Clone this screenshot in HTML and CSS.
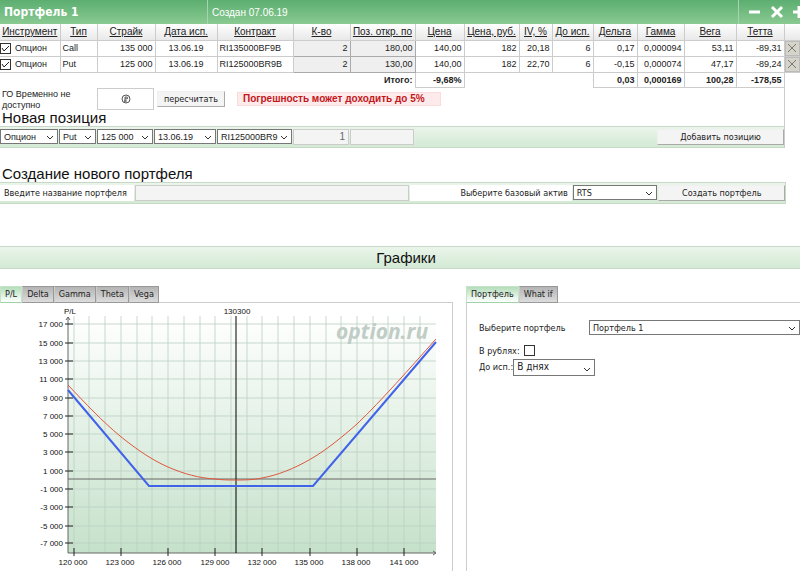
FILE: index.html
```html
<!DOCTYPE html>
<html lang="ru">
<head>
    <meta charset="UTF-8">
    <meta name="viewport" content="width=device-width, initial-scale=1.0">
    <title>Портфель 1</title>
    <link rel="stylesheet" href="styles.css">
</head>
<body>

    <header class="title-bar">
        <h1>Портфель 1</h1>
        <span class="created">Создан 07.06.19</span>
        <div class="title-buttons">
            <button type="button" aria-label="Свернуть"><svg width="14" height="14" viewBox="0 0 14 14"><path d="M1 7H12"/></svg></button>
            <button type="button" aria-label="Закрыть"><svg width="14" height="14" viewBox="0 0 14 14"><path d="M2 2L12 12M12 2L2 12"/></svg></button>
            <button type="button" aria-label="Добавить"><svg width="14" height="14" viewBox="0 0 14 14"><path d="M1 7H13M7 1V13"/></svg></button>
        </div>
    </header>

    <table class="positions">
        <colgroup>
            <col class="c-tool"><col class="c-type"><col class="c-strike"><col class="c-date"><col class="c-contract"><col class="c-qty"><col class="c-open"><col class="c-price"><col class="c-rub"><col class="c-iv"><col class="c-days"><col class="c-delta"><col class="c-gamma"><col class="c-vega"><col class="c-theta"><col class="c-del">
        </colgroup>
        <thead>
            <tr>
                <th><a href="#">Инструмент</a></th>
                <th><a href="#">Тип</a></th>
                <th><a href="#">Страйк</a></th>
                <th><a href="#">Дата исп.</a></th>
                <th><a href="#">Контракт</a></th>
                <th><a href="#">К-во</a></th>
                <th><a href="#">Поз. откр. по</a></th>
                <th><a href="#">Цена</a></th>
                <th><a href="#">Цена, руб.</a></th>
                <th><a href="#">IV, %</a></th>
                <th><a href="#">До исп.</a></th>
                <th><a href="#">Дельта</a></th>
                <th><a href="#">Гамма</a></th>
                <th><a href="#">Вега</a></th>
                <th><a href="#">Тетта</a></th>
                <th></th>
            </tr>
        </thead>
        <tbody>
            <tr>
                <td class="tool"><label><input type="checkbox" checked>Опцион</label></td>
                <td class="left">Call</td>
                <td>135 000</td>
                <td class="center">13.06.19</td>
                <td class="left">RI135000BF9B</td>
                <td class="edit"><input type="text" value="2" aria-label="К-во"></td>
                <td class="edit"><input type="text" value="180,00" aria-label="Поз. откр. по"></td>
                <td>140,00</td>
                <td>182</td>
                <td>20,18</td>
                <td>6</td>
                <td>0,17</td>
                <td>0,000094</td>
                <td>53,11</td>
                <td>-89,31</td>
                <td class="del"><button type="button" aria-label="Удалить"><svg width="10" height="10" viewBox="0 0 10 10"><path d="M1 1L9 9M9 1L1 9"/></svg></button></td>
            </tr>
            <tr>
                <td class="tool"><label><input type="checkbox" checked>Опцион</label></td>
                <td class="left">Put</td>
                <td>125 000</td>
                <td class="center">13.06.19</td>
                <td class="left">RI125000BR9B</td>
                <td class="edit"><input type="text" value="2" aria-label="К-во"></td>
                <td class="edit"><input type="text" value="130,00" aria-label="Поз. откр. по"></td>
                <td>140,00</td>
                <td>182</td>
                <td>22,70</td>
                <td>6</td>
                <td>-0,15</td>
                <td>0,000074</td>
                <td>47,17</td>
                <td>-89,24</td>
                <td class="del"><button type="button" aria-label="Удалить"><svg width="10" height="10" viewBox="0 0 10 10"><path d="M1 1L9 9M9 1L1 9"/></svg></button></td>
            </tr>
        </tbody>
        <tfoot>
            <tr>
                <td colspan="7" class="total">Итого:</td>
                <td>-9,68%</td>
                <td colspan="3" class="blank"></td>
                <td>0,03</td>
                <td>0,000169</td>
                <td>100,28</td>
                <td>-178,55</td>
                <td class="none"></td>
            </tr>
        </tfoot>
    </table>

    <section class="new-position">
        <div class="margin-row">
            <span class="margin-label">ГО Временно не доступно</span>
            <span class="margin-box"><svg width="10" height="10" viewBox="0 0 10 10"><circle cx="5" cy="5" r="4"/><path d="M4 8V3H5Q7 3 7 4Q7 5 4 5M3 7H6"/></svg></span>
            <button type="button" class="btn">пересчитать</button>
            <span class="warning">Погрешность может доходить до 5%</span>
        </div>
        <h2>Новая позиция</h2>
        <form class="bar position-bar">
            <select aria-label="Инструмент"><option>Опцион</option></select>
            <select aria-label="Тип"><option>Put</option></select>
            <select aria-label="Страйк"><option>125 000</option></select>
            <select aria-label="Дата исп."><option>13.06.19</option></select>
            <select aria-label="Контракт"><option>RI125000BR9</option></select>
            <input type="text" value="1" aria-label="К-во">
            <input type="text" value="" aria-label="Поз. откр. по">
            <button type="button" class="btn">Добавить позицию</button>
        </form>
    </section>

    <section class="new-portfolio">
        <h2>Создание нового портфеля</h2>
        <form class="bar portfolio-bar">
            <label for="portfolio-name">Введите название портфеля</label>
            <input type="text" id="portfolio-name">
            <label for="asset" class="right">Выберите базовый актив</label>
            <select id="asset"><option>RTS</option></select>
            <button type="button" class="btn">Создать портфель</button>
        </form>
    </section>

    <h2 class="charts-title">Графики</h2>

    <main class="charts">
        <section class="pane">
            <nav class="tabs">
                <button type="button" class="active">P/L</button>
                <button type="button">Delta</button>
                <button type="button">Gamma</button>
                <button type="button">Theta</button>
                <button type="button">Vega</button>
            </nav>
            <div class="pane-body chart-body">
                <svg class="chart" viewBox="0 0 452 270">
                    <defs>
                        <linearGradient id="plot" x1="0" y1="0" x2="0" y2="1">
                            <stop offset="0" stop-color="#ffffff"/>
                            <stop offset="1" stop-color="#c5e1ca"/>
                        </linearGradient>
                    </defs>
                    <rect x="68" y="13" width="368" height="237" fill="url(#plot)"/>
                    <path class="grid" d="M74 13V250M89 13V250M105 13V250M121 13V250M137 13V250M152 13V250M168 13V250M184 13V250M200 13V250M215 13V250M231 13V250M247 13V250M262 13V250M278 13V250M294 13V250M310 13V250M326 13V250M341 13V250M357 13V250M373 13V250M388 13V250M404 13V250M420 13V250"/>
                    <path class="grid" d="M68 21H436M68 40H436M68 58H436M68 76H436M68 95H436M68 113H436M68 131H436M68 149H436M68 168H436M68 186H436M68 204H436M68 223H436M68 240H436"/>
                    <text class="watermark" x="336" y="36">option.ru</text>
                    <path class="axis" d="M68 14V250H435M66 17L68 14L70 17M433 248L436 250L433 252"/>
                    <path class="axis" d="M68 176H436"/>
                    <path class="tick" d="M65 21H73M65 40H73M65 58H73M65 76H73M65 95H73M65 113H73M65 131H73M65 149H73M65 168H73M65 186H73M65 204H73M65 223H73M65 240H73"/>
                    <path class="tick" d="M74 245V253M121 245V253M168 245V253M215 245V253M262 245V253M310 245V253M357 245V253M404 245V253"/>
                    <path class="now" d="M236 13V250"/>
                    <path class="current" d="M68 82C85 100 103 119 120 133C136 146 152 157 168 164C184 171 199 175 215 176C222 177 229 177 236 177C245 177 253 177 262 175C278 172 293 166 309 157C325 148 341 135 357 121C383 96 409 66 436 36"/>
                    <path class="expiry" d="M68 87L149 183H313L436 39"/>
                    <g class="labels">
                        <text x="70" y="11">P/L</text>
                        <text x="237" y="11">130300</text>
                        <text x="73" y="262">120 000</text>
                        <text x="120" y="262">123 000</text>
                        <text x="167" y="262">126 000</text>
                        <text x="215" y="262">129 000</text>
                        <text x="262" y="262">132 000</text>
                        <text x="309" y="262">135 000</text>
                        <text x="356" y="262">138 000</text>
                        <text x="404" y="262">141 000</text>
                    </g>
                    <g class="labels labels-y">
                        <text x="63" y="24">17 000</text>
                        <text x="63" y="43">15 000</text>
                        <text x="63" y="61">13 000</text>
                        <text x="63" y="79">11 000</text>
                        <text x="63" y="98">9 000</text>
                        <text x="63" y="116">7 000</text>
                        <text x="63" y="134">5 000</text>
                        <text x="63" y="152">3 000</text>
                        <text x="63" y="171">1 000</text>
                        <text x="63" y="189">-1 000</text>
                        <text x="63" y="207">-3 000</text>
                        <text x="63" y="226">-5 000</text>
                        <text x="63" y="243">-7 000</text>
                    </g>
                </svg>
            </div>
        </section>

        <section class="pane">
            <nav class="tabs">
                <button type="button" class="active">Портфель</button>
                <button type="button">What if</button>
            </nav>
            <form class="pane-body settings">
                <div class="row row-portfolio">
                    <label for="portfolio">Выберите портфель</label>
                    <select id="portfolio"><option>Портфель 1</option></select>
                </div>
                <div class="row">
                    <label for="rub">В рублях:</label>
                    <input type="checkbox" id="rub">
                </div>
                <div class="row row-days">
                    <label for="days">До исп.:</label>
                    <select id="days"><option>В днях</option></select>
                </div>
            </form>
        </section>
    </main>

</body>
</html>
```
FILE: styles.css
```css
* { box-sizing: border-box; }
body { margin: 0; background: #fff; color: #222; font: 10px/12px "Liberation Sans", Arial, sans-serif; overflow-x: hidden; }
button, input, select { font: inherit; color: inherit; margin: 0; border-radius: 0; }
button { padding: 0; }
h1, h2 { margin: 0; font-weight: normal; }
h2 { font-size: 15px; line-height: 16px; padding-left: 2px; color: #111; }

/* title */
.title-bar { display: grid; grid-template-columns: 207fr 531fr 62fr; height: 24px; align-items: center; color: #fff; background: linear-gradient(#5cae70, #8aca92); overflow: hidden; }
.title-bar > * { min-width: 0; }
.title-bar h1 { font: bold 12px/24px "DejaVu Sans Condensed", Tahoma, sans-serif; padding: 0 0 0 4px; }
.created { padding: 2px 0 0 4px; line-height: 22px; border-left: 1px solid #a5d5ac; }
.title-buttons { display: flex; gap: 8px; height: 24px; align-items: center; padding-left: 9px; border-left: 1px solid #a5d5ac; }
.title-buttons button { flex: none; height: 14px; border: 0; background: none; }
.title-buttons svg { display: block; fill: none; stroke: #fff; stroke-width: 3; }

/* positions */
.positions { width: 100%; table-layout: fixed; border-collapse: collapse; }
.c-tool { width: 60px; }
.c-type { width: 37px; }
.c-strike { width: 58px; }
.c-date { width: 62px; }
.c-contract { width: 76px; }
.c-qty { width: 57px; }
.c-open { width: 65px; }
.c-price { width: 49px; }
.c-rub { width: 55px; }
.c-iv { width: 33px; }
.c-days { width: 41px; }
.c-delta { width: 44px; }
.c-gamma { width: 47px; }
.c-vega { width: 52px; }
.c-theta { width: 48px; }
.c-del { width: 16px; }
.positions th { height: 16px; padding: 0; font-weight: normal; white-space: nowrap; border: 1px solid #ccc; border-top: 0; background: linear-gradient(#fff, #e8e8e8); }
.positions th:first-child, .positions td:first-child { border-left: 0; }
.positions th a { color: #222; }
.positions td { height: 16px; padding: 0 2px; font-size: 9px; text-align: right; white-space: nowrap; border: 1px solid #ccc; }
.positions .left { text-align: left; }
.positions .center { text-align: center; }
.positions .tool { padding: 0; text-align: left; }
.tool label { display: flex; align-items: center; gap: 4px; }
.positions .edit { padding: 0; background: #efefef; border-color: #aaa; }
.edit input { display: block; width: 100%; height: 15px; border: 0; padding: 0 2px; background: none; text-align: right; }
.positions .del { padding: 0; }
.del button { display: flex; align-items: center; justify-content: center; width: 100%; height: 15px; border: 1px solid #bbb; background: #d6d3c9; }
.del svg { fill: none; stroke: #777; }
.positions tfoot td { height: 15px; font-weight: bold; }
.positions tfoot .total { border: 0; }
.positions tfoot .blank, .positions tfoot .none { border-bottom: 0; }
.positions tfoot .none { border-right: 0; }

/* form controls */
input[type="checkbox"] { appearance: none; flex: none; width: 11px; height: 11px; border: 1px solid #333; background: #fff; }
input[type="checkbox"]:checked { background: #fff url("data:image/svg+xml,%3Csvg xmlns='http://www.w3.org/2000/svg' viewBox='0 0 9 9'%3E%3Cpath d='M1 4L3 7L8 2' fill='none' stroke='%23222'/%3E%3C/svg%3E"); }
select { appearance: none; min-width: 0; height: 15px; padding: 0 11px 0 3px; border: 1px solid #777; background: #fff url("data:image/svg+xml,%3Csvg xmlns='http://www.w3.org/2000/svg' width='8' height='6'%3E%3Cpath d='M1 1L4 4L7 1' fill='none' stroke='%23333'/%3E%3C/svg%3E") no-repeat right 3px bottom 2px; }
.btn, .tabs button, .portfolio-bar, .settings { font-family: "DejaVu Sans Condensed", Tahoma, sans-serif; font-size: 9px; }
.btn { height: 16px; border: 1px solid #f0f0f0; border-right-color: #aaa; border-bottom-color: #aaa; background: #f4f4f4; }

.new-position { margin-right: 15px; border-right: 1px solid #ccc; }
.margin-row { display: flex; align-items: center; height: 22px; }
.margin-label { width: 97px; padding: 2px 20px 0 2px; line-height: 11px; font-size: 9px; }
.margin-box { display: flex; align-items: center; justify-content: center; width: 57px; height: 22px; border: 1px solid #ccc; }
.margin-box svg { fill: none; stroke: #555; }
.margin-row .btn { width: 68px; margin-left: 3px; }
.warning { width: 204px; margin-left: 12px; padding-left: 5px; font-weight: bold; color: #c4161c; background: #fdeaea; border: 1px solid #fbdcdc; white-space: nowrap; }

.bar { display: grid; align-items: center; height: 22px; border-top: 1px solid #c8d8c8; border-bottom: 1px solid #c8d8c8; background: linear-gradient(#eaf5ea, #d3ead4); }
.bar input { min-width: 0; height: 16px; padding: 0 3px; text-align: right; color: #666; border: 1px solid #ccc; background: #f4f4f4; }
.position-bar { grid-template-columns: 58fr 37fr 56fr 62fr 75fr 56fr 64fr 241fr 127fr; column-gap: 1px; }
.position-bar select { font-size: 9px; }
.position-bar .btn { grid-column: 9; }

.new-portfolio { margin: 18px 14px 0 0; }
.portfolio-bar { grid-template-columns: 135fr 275fr 162fr 85fr 127fr; column-gap: 1px; border-right: 1px solid #c8d8c8; }
.portfolio-bar label { height: 16px; padding: 0 4px; line-height: 16px; background: #fff; white-space: nowrap; }
.portfolio-bar .right { text-align: right; }

/* charts */
.charts-title { height: 23px; margin: 42px 0 17px; padding: 0 0 0 12px; line-height: 22px; text-align: center; border-top: 1px solid #c8d8c8; border-bottom: 1px solid #c8d8c8; background: linear-gradient(#eaf5ea, #d3ead4); }
.charts { display: grid; grid-template-columns: 453fr 334fr; gap: 13px; }
.pane { display: flex; flex-direction: column; }
.tabs { display: flex; position: relative; margin-bottom: -1px; }
.tabs button { height: 17px; padding: 0 4px; border: 1px solid #999; border-left-color: #ccc; background: linear-gradient(#b4b4b4, #dcdcdc); }
.tabs .active { border-color: #c5e3c8; border-bottom-color: #9fd3a6; background: linear-gradient(#b4ddb9, #fff); }
.pane-body { flex: 1; border-top: 1px solid #ccc; }
.chart-body { border-right: 1px solid #ccc; }
.chart { display: block; width: 100%; }
.grid { fill: none; stroke: #bccfc4; stroke-opacity: 0.8; }
.axis { fill: none; stroke: #666; }
.tick { fill: none; stroke: #222; }
.now { stroke: #000; }
.current { fill: none; stroke: #e0573f; }
.expiry { fill: none; stroke: #4163e8; stroke-width: 2; }
.labels { font-size: 8px; fill: #111; text-anchor: middle; }
.labels-y { text-anchor: end; }
.watermark { font: italic bold 21px "Open Sans", sans-serif; fill: #c0cdc6; }

.settings { padding: 17px 0 0 12px; border-left: 1px solid #ccc; }
.row { display: flex; align-items: center; gap: 4px; height: 16px; }
.row-portfolio { gap: 0; margin-bottom: 7px; }
.row-portfolio label { width: 110px; }
.row-portfolio select { flex: 1; }
.row-days { gap: 0; height: 17px; }
.row-days select { width: 82px; height: 17px; font-size: 10px; }
```
